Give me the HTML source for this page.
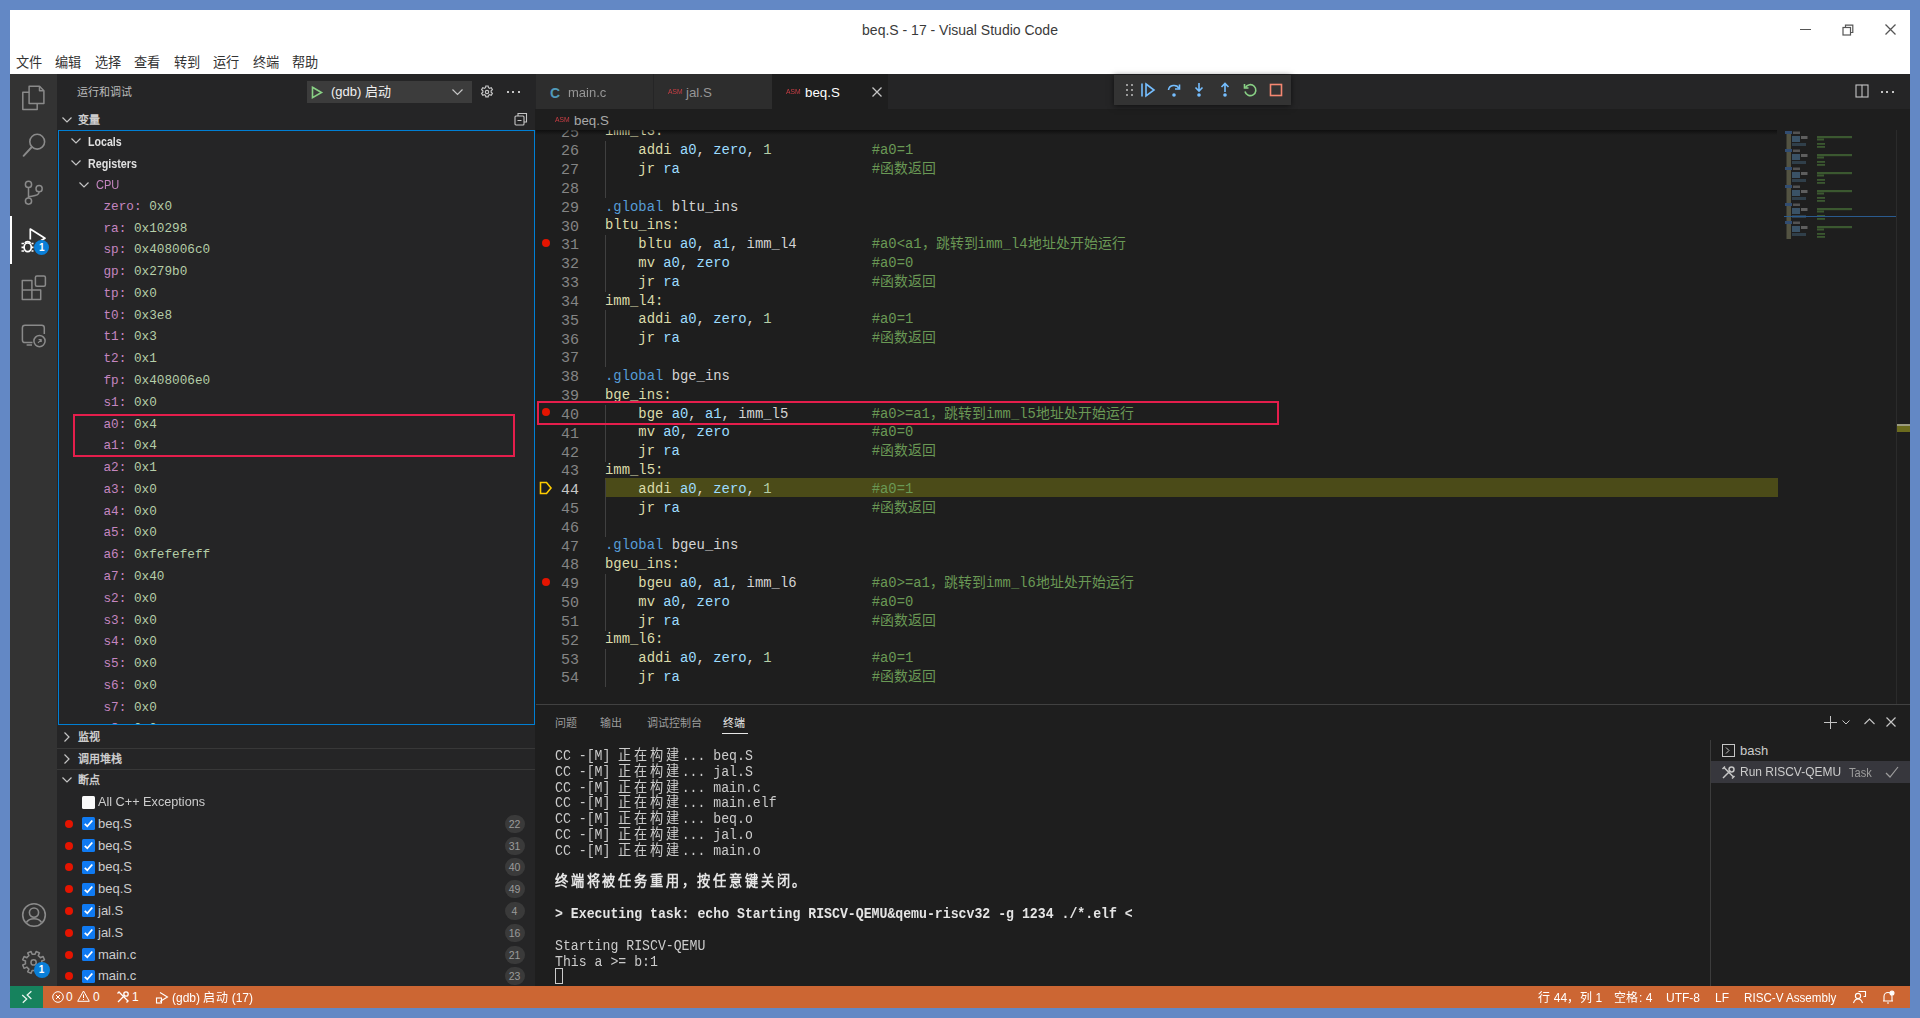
<!DOCTYPE html><html lang="zh-CN"><head><meta charset="utf-8"><title>beq.S - 17 - Visual Studio Code</title><style>
*{box-sizing:border-box;margin:0;padding:0}
html,body{width:1920px;height:1018px;overflow:hidden;background:#6388c5}
body{position:relative;font-family:"Liberation Sans",sans-serif}
.a{position:absolute}
.mono{font-family:"Liberation Mono",monospace}
.nw{white-space:pre}
svg{overflow:visible}
</style></head><body>
<div class="a" style="left:10px;top:10px;width:1900px;height:64px;background:#fff;"></div>
<div class="a nw " style="top:20.00px;font-size:14px;line-height:20px;color:#3a3a3a;left:660.00px;width:600px;text-align:center;">beq.S - 17 - Visual Studio Code</div>
<div class="a nw " style="top:53.30px;font-size:13.2px;line-height:20px;color:#333;font-weight:500;left:16.00px;">文件</div>
<div class="a nw " style="top:53.30px;font-size:13.2px;line-height:20px;color:#333;font-weight:500;left:55.00px;">编辑</div>
<div class="a nw " style="top:53.30px;font-size:13.2px;line-height:20px;color:#333;font-weight:500;left:95.00px;">选择</div>
<div class="a nw " style="top:53.30px;font-size:13.2px;line-height:20px;color:#333;font-weight:500;left:134.00px;">查看</div>
<div class="a nw " style="top:53.30px;font-size:13.2px;line-height:20px;color:#333;font-weight:500;left:174.00px;">转到</div>
<div class="a nw " style="top:53.30px;font-size:13.2px;line-height:20px;color:#333;font-weight:500;left:213.00px;">运行</div>
<div class="a nw " style="top:53.30px;font-size:13.2px;line-height:20px;color:#333;font-weight:500;left:253.00px;">终端</div>
<div class="a nw " style="top:53.30px;font-size:13.2px;line-height:20px;color:#333;font-weight:500;left:292.00px;">帮助</div>
<div class="a" style="left:1800px;top:29px;width:11px;height:1px;background:#555;"></div>
<svg class="a" style="left:1842px;top:24px" width="12" height="12"><rect x="1" y="3.5" width="7.5" height="7.5" fill="none" stroke="#555" stroke-width="1.2"/><path d="M3.5 3.5V1.2h7.3v7.3H8.5" fill="none" stroke="#555" stroke-width="1.2"/></svg>
<svg class="a" style="left:1885px;top:24px" width="11" height="11"><path d="M0.5 0.5L10.5 10.5M10.5 0.5L0.5 10.5" stroke="#555" stroke-width="1.3"/></svg>
<div class="a" style="left:10px;top:74px;width:47px;height:912px;background:#333;"></div>
<div class="a" style="left:10px;top:216px;width:2px;height:48px;background:#fff;"></div>
<svg class="a" style="left:0;top:0" width="60" height="1018" fill="none" stroke="#8a8a8a" stroke-width="1.5" stroke-linejoin="round">
<path d="M29.1 86.3H39.5L43.9 90.7V103.6H29.1Z"/><path d="M39.5 86.3V90.7H43.9"/><path d="M29.1 92.2H22.8V109.5H37.2V103.6"/>
<circle cx="37.2" cy="141.7" r="7.4" stroke-width="1.6"/><path d="M31.8 147L23.6 155.8" stroke-width="1.9" stroke-linecap="round"/>
<circle cx="28.5" cy="184.4" r="3.1"/><circle cx="28.5" cy="201.1" r="3.1"/><circle cx="39.1" cy="188.7" r="3.1"/>
<path d="M28.5 187.5V198M39.1 191.8C39.1 195.5 35 195.5 28.8 196.8"/>
<g stroke="#fff" stroke-width="1.7"><path d="M30.3 239.5V229L45 238.2L41 240.6"/>
<ellipse cx="27.7" cy="247.3" rx="3.6" ry="4.3"/><path d="M25 243.3a2.8 2.3 0 0 1 5.4 0"/>
<path d="M21.5 243.5h2.5M21.5 247.3h2.5M21.5 251h2.5M31.5 243.5h2M31.5 247.3h2M31.5 251h2"/></g>
<path d="M22.3 280.4H31.9V299.4H22.3ZM22.3 290H40.7V299.4H31.9"/><rect x="35.4" y="276" width="10" height="10.3" rx="1.5"/>
<path d="M40 325.2H25a2.6 2.6 0 0 0-2.6 2.6V339.9a2.6 2.6 0 0 0 2.6 2.6H32.5M44.3 334V327.8a2.6 2.6 0 0 0-2.6-2.6H40M26.6 344.9H32"/>
<circle cx="39.5" cy="341.1" r="5.6"/><path d="M38 342.8l3-3M38.6 339.5h2.6v2.6" stroke-width="1.2"/>
<circle cx="34" cy="915" r="11.3" stroke-width="1.6"/><circle cx="34" cy="912.6" r="4.6" stroke-width="1.6"/><path d="M26.4 922.5C28 919.8 30.8 918.7 34 918.7S40 919.8 41.6 922.5" stroke-width="1.6"/>
<path d="M41.80 962.40 L41.67 963.87 L44.51 964.93 L43.10 968.33 L40.35 967.06 L39.40 968.20 L38.26 969.15 L39.53 971.90 L36.13 973.31 L35.07 970.47 L33.60 970.60 L32.13 970.47 L31.07 973.31 L27.67 971.90 L28.94 969.15 L27.80 968.20 L26.85 967.06 L24.10 968.33 L22.69 964.93 L25.53 963.87 L25.40 962.40 L25.53 960.93 L22.69 959.87 L24.10 956.47 L26.85 957.74 L27.80 956.60 L28.94 955.65 L27.67 952.90 L31.07 951.49 L32.13 954.33 L33.60 954.20 L35.07 954.33 L36.13 951.49 L39.53 952.90 L38.26 955.65 L39.40 956.60 L40.35 957.74 L43.10 956.47 L44.51 959.87 L41.67 960.93Z" stroke-width="1.5"/><circle cx="33.6" cy="962.4" r="2.6"/>
</svg>
<div class="a" style="left:34.4px;top:240.4px;width:15px;height:15px;border-radius:7.5px;background:#0a7fd8;color:#fff;font-size:10px;line-height:15px;text-align:center;font-weight:bold">1</div>
<div class="a" style="left:33.5px;top:962.3px;width:16px;height:16px;border-radius:8px;background:#0a7fd8;color:#fff;font-size:10px;line-height:16px;text-align:center;font-weight:bold">1</div>
<div class="a" style="left:57px;top:74px;width:478px;height:912px;background:#252526;"></div>
<div class="a nw " style="top:81.50px;font-size:11px;line-height:20px;color:#bbbbbb;left:77.00px;">运行和调试</div>
<div class="a" style="left:307px;top:81px;width:165px;height:22px;background:#3c3c3c;"></div>
<svg class="a" style="left:311px;top:86px" width="12" height="13"><path d="M1.5 1.3L10.5 6.5L1.5 11.7z" fill="none" stroke="#89d185" stroke-width="1.6"/></svg>
<div class="a nw " style="top:82.00px;font-size:13px;line-height:20px;color:#f0f0f0;left:331.00px;">(gdb) 启动</div>
<svg class="a" style="left:452px;top:89px" width="11" height="7"><path d="M0.5 0.5L5.5 5.5L10.5 0.5" fill="none" stroke="#c5c5c5" stroke-width="1.2"/></svg>
<svg class="a" style="left:479px;top:84px" width="16" height="16" viewBox="0 0 24 24" fill="none" stroke="#c5c5c5" stroke-width="1.8"><circle cx="12" cy="12" r="2.5"/><path d="M10.3 3h3.4l.5 2.5 1.8 1 2.4-.9 1.7 2.9-1.9 1.7v2l1.9 1.7-1.7 2.9-2.4-.9-1.8 1-.5 2.5h-3.4l-.5-2.5-1.8-1-2.4.9-1.7-2.9 1.9-1.7v-2L3.9 8.5l1.7-2.9 2.4.9 1.8-1z"/></svg>
<div class="a" style="left:506.5px;top:91px;width:2px;height:2px;background:#c5c5c5;"></div>
<div class="a" style="left:512px;top:91px;width:2px;height:2px;background:#c5c5c5;"></div>
<div class="a" style="left:517.5px;top:91px;width:2px;height:2px;background:#c5c5c5;"></div>
<svg class="a" style="left:62px;top:116.5px" width="10" height="6"><path d="M0.5 0.5L5 5L9.5 0.5" fill="none" stroke="#c5c5c5" stroke-width="1.2"/></svg>
<div class="a nw " style="top:109.50px;font-size:11px;line-height:20px;color:#cccccc;font-weight:bold;left:78.00px;">变量</div>
<svg class="a" style="left:514px;top:112px" width="14" height="14" viewBox="0 0 14 14" fill="none" stroke="#c5c5c5" stroke-width="1.1"><rect x="1" y="4" width="9" height="9" rx="1"/><path d="M4 4V1.5h8.5V10H10M3.5 8.5h4"/></svg>
<div class="a" style="left:58px;top:130px;width:477px;height:595px;border:1px solid #007fd4;overflow:hidden">
</div>
<div class="a" style="left:58px;top:131px;width:476px;height:593px;overflow:hidden">
<svg class="a" style="left:13px;top:7.389999999999986px" width="10" height="6"><path d="M0.5 0.5L5 5L9.5 0.5" fill="none" stroke="#c5c5c5" stroke-width="1.2"/></svg>
<div class="a nw " style="left:30.00px;top:0.89px;font-size:12.5px;line-height:20px;color:#e0e0e0;transform:scaleX(0.85);transform-origin:0 0;font-weight:bold;">Locals</div>
<svg class="a" style="left:13px;top:29.170000000000016px" width="10" height="6"><path d="M0.5 0.5L5 5L9.5 0.5" fill="none" stroke="#c5c5c5" stroke-width="1.2"/></svg>
<div class="a nw " style="left:30.00px;top:22.67px;font-size:12.5px;line-height:20px;color:#e0e0e0;transform:scaleX(0.86);transform-origin:0 0;font-weight:bold;">Registers</div>
<svg class="a" style="left:21px;top:50.94999999999999px" width="10" height="6"><path d="M0.5 0.5L5 5L9.5 0.5" fill="none" stroke="#c5c5c5" stroke-width="1.2"/></svg>
<div class="a nw " style="left:38.00px;top:43.95px;font-size:13px;line-height:20px;color:#c586c0;transform:scaleX(0.85);transform-origin:0 0;">CPU</div>
<div class="a nw mono" style="left:45.50px;top:65.73px;font-size:12.7px;line-height:20px;color:#ccc;"><span style="color:#c586c0">zero:</span> <span style="color:#b5cea8">0x0</span></div>
<div class="a nw mono" style="left:45.50px;top:87.51px;font-size:12.7px;line-height:20px;color:#ccc;"><span style="color:#c586c0">ra:</span> <span style="color:#b5cea8">0x10298</span></div>
<div class="a nw mono" style="left:45.50px;top:109.29px;font-size:12.7px;line-height:20px;color:#ccc;"><span style="color:#c586c0">sp:</span> <span style="color:#b5cea8">0x408006c0</span></div>
<div class="a nw mono" style="left:45.50px;top:131.07px;font-size:12.7px;line-height:20px;color:#ccc;"><span style="color:#c586c0">gp:</span> <span style="color:#b5cea8">0x279b0</span></div>
<div class="a nw mono" style="left:45.50px;top:152.85px;font-size:12.7px;line-height:20px;color:#ccc;"><span style="color:#c586c0">tp:</span> <span style="color:#b5cea8">0x0</span></div>
<div class="a nw mono" style="left:45.50px;top:174.63px;font-size:12.7px;line-height:20px;color:#ccc;"><span style="color:#c586c0">t0:</span> <span style="color:#b5cea8">0x3e8</span></div>
<div class="a nw mono" style="left:45.50px;top:196.41px;font-size:12.7px;line-height:20px;color:#ccc;"><span style="color:#c586c0">t1:</span> <span style="color:#b5cea8">0x3</span></div>
<div class="a nw mono" style="left:45.50px;top:218.19px;font-size:12.7px;line-height:20px;color:#ccc;"><span style="color:#c586c0">t2:</span> <span style="color:#b5cea8">0x1</span></div>
<div class="a nw mono" style="left:45.50px;top:239.97px;font-size:12.7px;line-height:20px;color:#ccc;"><span style="color:#c586c0">fp:</span> <span style="color:#b5cea8">0x408006e0</span></div>
<div class="a nw mono" style="left:45.50px;top:261.75px;font-size:12.7px;line-height:20px;color:#ccc;"><span style="color:#c586c0">s1:</span> <span style="color:#b5cea8">0x0</span></div>
<div class="a nw mono" style="left:45.50px;top:283.53px;font-size:12.7px;line-height:20px;color:#ccc;"><span style="color:#c586c0">a0:</span> <span style="color:#b5cea8">0x4</span></div>
<div class="a nw mono" style="left:45.50px;top:305.31px;font-size:12.7px;line-height:20px;color:#ccc;"><span style="color:#c586c0">a1:</span> <span style="color:#b5cea8">0x4</span></div>
<div class="a nw mono" style="left:45.50px;top:327.09px;font-size:12.7px;line-height:20px;color:#ccc;"><span style="color:#c586c0">a2:</span> <span style="color:#b5cea8">0x1</span></div>
<div class="a nw mono" style="left:45.50px;top:348.87px;font-size:12.7px;line-height:20px;color:#ccc;"><span style="color:#c586c0">a3:</span> <span style="color:#b5cea8">0x0</span></div>
<div class="a nw mono" style="left:45.50px;top:370.65px;font-size:12.7px;line-height:20px;color:#ccc;"><span style="color:#c586c0">a4:</span> <span style="color:#b5cea8">0x0</span></div>
<div class="a nw mono" style="left:45.50px;top:392.43px;font-size:12.7px;line-height:20px;color:#ccc;"><span style="color:#c586c0">a5:</span> <span style="color:#b5cea8">0x0</span></div>
<div class="a nw mono" style="left:45.50px;top:414.21px;font-size:12.7px;line-height:20px;color:#ccc;"><span style="color:#c586c0">a6:</span> <span style="color:#b5cea8">0xfefefeff</span></div>
<div class="a nw mono" style="left:45.50px;top:435.99px;font-size:12.7px;line-height:20px;color:#ccc;"><span style="color:#c586c0">a7:</span> <span style="color:#b5cea8">0x40</span></div>
<div class="a nw mono" style="left:45.50px;top:457.77px;font-size:12.7px;line-height:20px;color:#ccc;"><span style="color:#c586c0">s2:</span> <span style="color:#b5cea8">0x0</span></div>
<div class="a nw mono" style="left:45.50px;top:479.55px;font-size:12.7px;line-height:20px;color:#ccc;"><span style="color:#c586c0">s3:</span> <span style="color:#b5cea8">0x0</span></div>
<div class="a nw mono" style="left:45.50px;top:501.33px;font-size:12.7px;line-height:20px;color:#ccc;"><span style="color:#c586c0">s4:</span> <span style="color:#b5cea8">0x0</span></div>
<div class="a nw mono" style="left:45.50px;top:523.11px;font-size:12.7px;line-height:20px;color:#ccc;"><span style="color:#c586c0">s5:</span> <span style="color:#b5cea8">0x0</span></div>
<div class="a nw mono" style="left:45.50px;top:544.89px;font-size:12.7px;line-height:20px;color:#ccc;"><span style="color:#c586c0">s6:</span> <span style="color:#b5cea8">0x0</span></div>
<div class="a nw mono" style="left:45.50px;top:566.67px;font-size:12.7px;line-height:20px;color:#ccc;"><span style="color:#c586c0">s7:</span> <span style="color:#b5cea8">0x0</span></div>
<div class="a nw mono" style="left:45.50px;top:588.45px;font-size:12.7px;line-height:20px;color:#ccc;"><span style="color:#c586c0">s8:</span> <span style="color:#b5cea8">0x0</span></div>
</div>
<div class="a" style="left:73px;top:414px;width:442px;height:43px;border:2.5px solid #e51e4c"></div>
<svg class="a" style="left:64px;top:731.7px" width="6" height="10"><path d="M0.5 0.5L5 5L0.5 9.5" fill="none" stroke="#c5c5c5" stroke-width="1.2"/></svg>
<div class="a nw " style="top:726.70px;font-size:11px;line-height:20px;color:#cccccc;font-weight:bold;left:78.00px;">监视</div>
<div class="a" style="left:57px;top:747.6px;width:478px;height:1px;background:#383838;"></div>
<svg class="a" style="left:64px;top:753.5px" width="6" height="10"><path d="M0.5 0.5L5 5L0.5 9.5" fill="none" stroke="#c5c5c5" stroke-width="1.2"/></svg>
<div class="a nw " style="top:748.50px;font-size:11px;line-height:20px;color:#cccccc;font-weight:bold;left:78.00px;">调用堆栈</div>
<div class="a" style="left:57px;top:769.4px;width:478px;height:1px;background:#383838;"></div>
<svg class="a" style="left:62px;top:777.3px" width="10" height="6"><path d="M0.5 0.5L5 5L9.5 0.5" fill="none" stroke="#c5c5c5" stroke-width="1.2"/></svg>
<div class="a nw " style="top:770.30px;font-size:11px;line-height:20px;color:#cccccc;font-weight:bold;left:78.00px;">断点</div>
<div class="a" style="left:82px;top:795.59px;width:13px;height:13px;background:#fafafa;border-radius:1.5px"></div>
<div class="a nw " style="top:792.09px;font-size:13px;line-height:20px;color:#cccccc;transform:scaleX(0.975);transform-origin:0 0;left:98.00px;">All C++ Exceptions</div>
<div class="a" style="left:65px;top:819.87px;width:8px;height:8px;border-radius:4px;background:#e51400"></div>
<svg class="a" style="left:82px;top:817.37px" width="13" height="13"><rect width="13" height="13" rx="1.5" fill="#0f7af2"/><path d="M2.8 6.8L5.3 9.3L10.3 3.5" fill="none" stroke="#fff" stroke-width="1.8"/></svg>
<div class="a nw " style="top:813.87px;font-size:13px;line-height:20px;color:#cccccc;left:98.00px;">beq.S</div>
<div class="a" style="left:504.5px;top:814.87px;width:20px;height:18px;border-radius:9px;background:#3a3a3a;color:#9a9a9a;font-size:10.5px;line-height:18px;text-align:center">22</div>
<div class="a" style="left:65px;top:841.6500000000001px;width:8px;height:8px;border-radius:4px;background:#e51400"></div>
<svg class="a" style="left:82px;top:839.1500000000001px" width="13" height="13"><rect width="13" height="13" rx="1.5" fill="#0f7af2"/><path d="M2.8 6.8L5.3 9.3L10.3 3.5" fill="none" stroke="#fff" stroke-width="1.8"/></svg>
<div class="a nw " style="top:835.65px;font-size:13px;line-height:20px;color:#cccccc;left:98.00px;">beq.S</div>
<div class="a" style="left:504.5px;top:836.6500000000001px;width:20px;height:18px;border-radius:9px;background:#3a3a3a;color:#9a9a9a;font-size:10.5px;line-height:18px;text-align:center">31</div>
<div class="a" style="left:65px;top:863.4300000000001px;width:8px;height:8px;border-radius:4px;background:#e51400"></div>
<svg class="a" style="left:82px;top:860.9300000000001px" width="13" height="13"><rect width="13" height="13" rx="1.5" fill="#0f7af2"/><path d="M2.8 6.8L5.3 9.3L10.3 3.5" fill="none" stroke="#fff" stroke-width="1.8"/></svg>
<div class="a nw " style="top:857.43px;font-size:13px;line-height:20px;color:#cccccc;left:98.00px;">beq.S</div>
<div class="a" style="left:504.5px;top:858.4300000000001px;width:20px;height:18px;border-radius:9px;background:#3a3a3a;color:#9a9a9a;font-size:10.5px;line-height:18px;text-align:center">40</div>
<div class="a" style="left:65px;top:885.21px;width:8px;height:8px;border-radius:4px;background:#e51400"></div>
<svg class="a" style="left:82px;top:882.71px" width="13" height="13"><rect width="13" height="13" rx="1.5" fill="#0f7af2"/><path d="M2.8 6.8L5.3 9.3L10.3 3.5" fill="none" stroke="#fff" stroke-width="1.8"/></svg>
<div class="a nw " style="top:879.21px;font-size:13px;line-height:20px;color:#cccccc;left:98.00px;">beq.S</div>
<div class="a" style="left:504.5px;top:880.21px;width:20px;height:18px;border-radius:9px;background:#3a3a3a;color:#9a9a9a;font-size:10.5px;line-height:18px;text-align:center">49</div>
<div class="a" style="left:65px;top:906.99px;width:8px;height:8px;border-radius:4px;background:#e51400"></div>
<svg class="a" style="left:82px;top:904.49px" width="13" height="13"><rect width="13" height="13" rx="1.5" fill="#0f7af2"/><path d="M2.8 6.8L5.3 9.3L10.3 3.5" fill="none" stroke="#fff" stroke-width="1.8"/></svg>
<div class="a nw " style="top:900.99px;font-size:13px;line-height:20px;color:#cccccc;left:98.00px;">jal.S</div>
<div class="a" style="left:504.5px;top:901.99px;width:20px;height:18px;border-radius:9px;background:#3a3a3a;color:#9a9a9a;font-size:10.5px;line-height:18px;text-align:center">4</div>
<div class="a" style="left:65px;top:928.77px;width:8px;height:8px;border-radius:4px;background:#e51400"></div>
<svg class="a" style="left:82px;top:926.27px" width="13" height="13"><rect width="13" height="13" rx="1.5" fill="#0f7af2"/><path d="M2.8 6.8L5.3 9.3L10.3 3.5" fill="none" stroke="#fff" stroke-width="1.8"/></svg>
<div class="a nw " style="top:922.77px;font-size:13px;line-height:20px;color:#cccccc;left:98.00px;">jal.S</div>
<div class="a" style="left:504.5px;top:923.77px;width:20px;height:18px;border-radius:9px;background:#3a3a3a;color:#9a9a9a;font-size:10.5px;line-height:18px;text-align:center">16</div>
<div class="a" style="left:65px;top:950.5500000000001px;width:8px;height:8px;border-radius:4px;background:#e51400"></div>
<svg class="a" style="left:82px;top:948.0500000000001px" width="13" height="13"><rect width="13" height="13" rx="1.5" fill="#0f7af2"/><path d="M2.8 6.8L5.3 9.3L10.3 3.5" fill="none" stroke="#fff" stroke-width="1.8"/></svg>
<div class="a nw " style="top:944.55px;font-size:13px;line-height:20px;color:#cccccc;left:98.00px;">main.c</div>
<div class="a" style="left:504.5px;top:945.5500000000001px;width:20px;height:18px;border-radius:9px;background:#3a3a3a;color:#9a9a9a;font-size:10.5px;line-height:18px;text-align:center">21</div>
<div class="a" style="left:65px;top:972.33px;width:8px;height:8px;border-radius:4px;background:#e51400"></div>
<svg class="a" style="left:82px;top:969.83px" width="13" height="13"><rect width="13" height="13" rx="1.5" fill="#0f7af2"/><path d="M2.8 6.8L5.3 9.3L10.3 3.5" fill="none" stroke="#fff" stroke-width="1.8"/></svg>
<div class="a nw " style="top:966.33px;font-size:13px;line-height:20px;color:#cccccc;left:98.00px;">main.c</div>
<div class="a" style="left:504.5px;top:967.33px;width:20px;height:18px;border-radius:9px;background:#3a3a3a;color:#9a9a9a;font-size:10.5px;line-height:18px;text-align:center">23</div>
<div class="a" style="left:535px;top:74px;width:1375px;height:912px;background:#1e1e1e;"></div>
<div class="a" style="left:535px;top:74px;width:1375px;height:35px;background:#252526;"></div>
<div class="a" style="left:536px;top:74px;width:117px;height:35px;background:#2d2d2d;"></div>
<div class="a" style="left:654px;top:74px;width:118px;height:35px;background:#2d2d2d;"></div>
<div class="a" style="left:772px;top:74px;width:116px;height:35px;background:#1e1e1e;"></div>
<div class="a nw " style="top:82.50px;font-size:14px;line-height:20px;color:#519aba;font-weight:bold;left:550.00px;">C</div>
<div class="a nw " style="top:82.80px;font-size:13.3px;line-height:20px;color:#969696;transform:scaleX(0.98);transform-origin:0 0;left:568.00px;">main.c</div>
<div class="a" style="left:667.5px;top:86.8px;font-size:7.5px;line-height:10px;color:#cc3e44;transform:scaleX(0.9);transform-origin:0 0">ASM</div>
<div class="a nw " style="top:82.80px;font-size:13.3px;line-height:20px;color:#969696;left:686.00px;">jal.S</div>
<div class="a" style="left:785.5px;top:86.8px;font-size:7.5px;line-height:10px;color:#cc3e44;transform:scaleX(0.9);transform-origin:0 0">ASM</div>
<div class="a nw " style="top:82.80px;font-size:13.3px;line-height:20px;color:#ffffff;left:805.00px;">beq.S</div>
<svg class="a" style="left:872px;top:87px" width="10" height="10"><path d="M0.5 0.5L9.5 9.5M9.5 0.5L0.5 9.5" fill="none" stroke="#c5c5c5" stroke-width="1.3"/></svg>
<div class="a" style="left:1114px;top:75px;width:177px;height:30px;background:#333;box-shadow:0 1px 6px rgba(0,0,0,.6)"></div>
<div class="a" style="left:1125.5px;top:84px;width:2px;height:2px;background:#9a9a9a;"></div>
<div class="a" style="left:1125.5px;top:89px;width:2px;height:2px;background:#9a9a9a;"></div>
<div class="a" style="left:1125.5px;top:94px;width:2px;height:2px;background:#9a9a9a;"></div>
<div class="a" style="left:1130.5px;top:84px;width:2px;height:2px;background:#9a9a9a;"></div>
<div class="a" style="left:1130.5px;top:89px;width:2px;height:2px;background:#9a9a9a;"></div>
<div class="a" style="left:1130.5px;top:94px;width:2px;height:2px;background:#9a9a9a;"></div>
<svg class="a" style="left:1140px;top:82px" width="16" height="16" fill="none" stroke="#75beff" stroke-width="1.6"><path d="M2 1.5v13"/><path d="M6 2L14 8L6 14z"/></svg>
<svg class="a" style="left:1166px;top:82px" width="16" height="16" fill="none" stroke="#75beff" stroke-width="1.6"><path d="M2.5 8a5.5 5 0 0 1 10.5-1.5"/><path d="M13.5 2.5v4.5H9"/><circle cx="8" cy="13" r="1.8" fill="#75beff" stroke="none"/></svg>
<svg class="a" style="left:1191px;top:82px" width="16" height="16" fill="none" stroke="#75beff" stroke-width="1.6"><path d="M8 1v7.5M4.5 5.5L8 9l3.5-3.5"/><circle cx="8" cy="13" r="1.8" fill="#75beff" stroke="none"/></svg>
<svg class="a" style="left:1217px;top:82px" width="16" height="16" fill="none" stroke="#75beff" stroke-width="1.6"><path d="M8 10V1.5M4.5 5L8 1.5L11.5 5"/><circle cx="8" cy="13" r="1.8" fill="#75beff" stroke="none"/></svg>
<svg class="a" style="left:1242px;top:82px" width="16" height="16" fill="none" stroke="#89d185" stroke-width="1.6"><path d="M3.5 5.5a5.5 5.5 0 1 1-.5 4"/><path d="M2.5 2v4h4"/></svg>
<svg class="a" style="left:1268px;top:82px" width="16" height="16" fill="none" stroke="#f48771" stroke-width="1.6"><rect x="2.5" y="2.5" width="11" height="11"/></svg>
<svg class="a" style="left:1855px;top:84px" width="14" height="14" fill="none" stroke="#c5c5c5" stroke-width="1.1"><rect x="1" y="1" width="12" height="12"/><path d="M7 1v12"/></svg>
<div class="a" style="left:1880.5px;top:91px;width:2px;height:2px;background:#c5c5c5;"></div>
<div class="a" style="left:1886px;top:91px;width:2px;height:2px;background:#c5c5c5;"></div>
<div class="a" style="left:1891.5px;top:91px;width:2px;height:2px;background:#c5c5c5;"></div>
<div class="a" style="left:555px;top:115px;font-size:7.5px;line-height:10px;color:#cc3e44;transform:scaleX(0.9);transform-origin:0 0">ASM</div>
<div class="a nw " style="top:110.50px;font-size:13.3px;line-height:20px;color:#a9a9a9;left:574.00px;">beq.S</div>
<div class="a" style="left:536px;top:130px;width:1241px;height:4.5px;background:linear-gradient(rgba(0,0,0,0.5),rgba(0,0,0,0));z-index:5"></div>
<div class="a" style="left:536px;top:130px;width:1374px;height:574px;overflow:hidden">
<div class="a" style="left:69px;top:348.35px;width:1173px;height:18.82px;background:#4b4b18"></div>
<div class="a nw mono" style="left:-56px;top:-5.43px;width:99px;text-align:right;font-size:15px;line-height:18.82px;color:#858585">25</div>
<div class="a nw mono" style="left:69px;top:-7.73px;font-size:13.88px;line-height:18.82px;color:#d4d4d4"><span style="color:#dcdcaa">imm_l3:</span></div>
<div class="a nw mono" style="left:-56px;top:13.39px;width:99px;text-align:right;font-size:15px;line-height:18.82px;color:#858585">26</div>
<div class="a" style="left:69px;top:11.09px;width:1px;height:19.32px;background:#404040"></div>
<div class="a nw mono" style="left:69px;top:11.09px;font-size:13.88px;line-height:18.82px;color:#d4d4d4">    <span style="color:#dcdcaa">addi</span> <span style="color:#9cdcfe">a0</span><span style="color:#d4d4d4">,</span> <span style="color:#9cdcfe">zero</span><span style="color:#d4d4d4">,</span> <span style="color:#b5cea8">1</span></div>
<div class="a nw mono" style="left:335.66px;top:11.09px;font-size:13.88px;line-height:18.82px;color:#6a9955">#a0=1</div>
<div class="a nw mono" style="left:-56px;top:32.21px;width:99px;text-align:right;font-size:15px;line-height:18.82px;color:#858585">27</div>
<div class="a" style="left:69px;top:29.91px;width:1px;height:19.32px;background:#404040"></div>
<div class="a nw mono" style="left:69px;top:29.91px;font-size:13.88px;line-height:18.82px;color:#d4d4d4">    <span style="color:#dcdcaa">jr</span> <span style="color:#9cdcfe">ra</span></div>
<div class="a nw mono" style="left:335.66px;top:29.91px;font-size:13.88px;line-height:18.82px;color:#6a9955">#函数返回</div>
<div class="a nw mono" style="left:-56px;top:51.03px;width:99px;text-align:right;font-size:15px;line-height:18.82px;color:#858585">28</div>
<div class="a" style="left:69px;top:48.73px;width:1px;height:19.32px;background:#404040"></div>
<div class="a nw mono" style="left:69px;top:48.73px;font-size:13.88px;line-height:18.82px;color:#d4d4d4"></div>
<div class="a nw mono" style="left:-56px;top:69.85px;width:99px;text-align:right;font-size:15px;line-height:18.82px;color:#858585">29</div>
<div class="a nw mono" style="left:69px;top:67.55px;font-size:13.88px;line-height:18.82px;color:#d4d4d4"><span style="color:#569cd6">.global</span> <span style="color:#d4d4d4">bltu_ins</span></div>
<div class="a nw mono" style="left:-56px;top:88.67px;width:99px;text-align:right;font-size:15px;line-height:18.82px;color:#858585">30</div>
<div class="a nw mono" style="left:69px;top:86.37px;font-size:13.88px;line-height:18.82px;color:#d4d4d4"><span style="color:#dcdcaa">bltu_ins:</span></div>
<div class="a nw mono" style="left:-56px;top:107.49px;width:99px;text-align:right;font-size:15px;line-height:18.82px;color:#858585">31</div>
<div class="a" style="left:69px;top:105.19px;width:1px;height:19.32px;background:#404040"></div>
<div class="a nw mono" style="left:69px;top:105.19px;font-size:13.88px;line-height:18.82px;color:#d4d4d4">    <span style="color:#dcdcaa">bltu</span> <span style="color:#9cdcfe">a0</span><span style="color:#d4d4d4">,</span> <span style="color:#9cdcfe">a1</span><span style="color:#d4d4d4">,</span> <span style="color:#d4d4d4">imm_l4</span></div>
<div class="a nw mono" style="left:335.66px;top:105.19px;font-size:13.88px;line-height:18.82px;color:#6a9955">#a0&lt;a1，跳转到imm_l4地址处开始运行</div>
<div class="a nw mono" style="left:-56px;top:126.31px;width:99px;text-align:right;font-size:15px;line-height:18.82px;color:#858585">32</div>
<div class="a" style="left:69px;top:124.01px;width:1px;height:19.32px;background:#404040"></div>
<div class="a nw mono" style="left:69px;top:124.01px;font-size:13.88px;line-height:18.82px;color:#d4d4d4">    <span style="color:#dcdcaa">mv</span> <span style="color:#9cdcfe">a0</span><span style="color:#d4d4d4">,</span> <span style="color:#9cdcfe">zero</span></div>
<div class="a nw mono" style="left:335.66px;top:124.01px;font-size:13.88px;line-height:18.82px;color:#6a9955">#a0=0</div>
<div class="a nw mono" style="left:-56px;top:145.13px;width:99px;text-align:right;font-size:15px;line-height:18.82px;color:#858585">33</div>
<div class="a" style="left:69px;top:142.83px;width:1px;height:19.32px;background:#404040"></div>
<div class="a nw mono" style="left:69px;top:142.83px;font-size:13.88px;line-height:18.82px;color:#d4d4d4">    <span style="color:#dcdcaa">jr</span> <span style="color:#9cdcfe">ra</span></div>
<div class="a nw mono" style="left:335.66px;top:142.83px;font-size:13.88px;line-height:18.82px;color:#6a9955">#函数返回</div>
<div class="a nw mono" style="left:-56px;top:163.95px;width:99px;text-align:right;font-size:15px;line-height:18.82px;color:#858585">34</div>
<div class="a nw mono" style="left:69px;top:161.65px;font-size:13.88px;line-height:18.82px;color:#d4d4d4"><span style="color:#dcdcaa">imm_l4:</span></div>
<div class="a nw mono" style="left:-56px;top:182.77px;width:99px;text-align:right;font-size:15px;line-height:18.82px;color:#858585">35</div>
<div class="a" style="left:69px;top:180.47px;width:1px;height:19.32px;background:#404040"></div>
<div class="a nw mono" style="left:69px;top:180.47px;font-size:13.88px;line-height:18.82px;color:#d4d4d4">    <span style="color:#dcdcaa">addi</span> <span style="color:#9cdcfe">a0</span><span style="color:#d4d4d4">,</span> <span style="color:#9cdcfe">zero</span><span style="color:#d4d4d4">,</span> <span style="color:#b5cea8">1</span></div>
<div class="a nw mono" style="left:335.66px;top:180.47px;font-size:13.88px;line-height:18.82px;color:#6a9955">#a0=1</div>
<div class="a nw mono" style="left:-56px;top:201.59px;width:99px;text-align:right;font-size:15px;line-height:18.82px;color:#858585">36</div>
<div class="a" style="left:69px;top:199.29px;width:1px;height:19.32px;background:#404040"></div>
<div class="a nw mono" style="left:69px;top:199.29px;font-size:13.88px;line-height:18.82px;color:#d4d4d4">    <span style="color:#dcdcaa">jr</span> <span style="color:#9cdcfe">ra</span></div>
<div class="a nw mono" style="left:335.66px;top:199.29px;font-size:13.88px;line-height:18.82px;color:#6a9955">#函数返回</div>
<div class="a nw mono" style="left:-56px;top:220.41px;width:99px;text-align:right;font-size:15px;line-height:18.82px;color:#858585">37</div>
<div class="a" style="left:69px;top:218.11px;width:1px;height:19.32px;background:#404040"></div>
<div class="a nw mono" style="left:69px;top:218.11px;font-size:13.88px;line-height:18.82px;color:#d4d4d4"></div>
<div class="a nw mono" style="left:-56px;top:239.23px;width:99px;text-align:right;font-size:15px;line-height:18.82px;color:#858585">38</div>
<div class="a nw mono" style="left:69px;top:236.93px;font-size:13.88px;line-height:18.82px;color:#d4d4d4"><span style="color:#569cd6">.global</span> <span style="color:#d4d4d4">bge_ins</span></div>
<div class="a nw mono" style="left:-56px;top:258.05px;width:99px;text-align:right;font-size:15px;line-height:18.82px;color:#858585">39</div>
<div class="a nw mono" style="left:69px;top:255.75px;font-size:13.88px;line-height:18.82px;color:#d4d4d4"><span style="color:#dcdcaa">bge_ins:</span></div>
<div class="a nw mono" style="left:-56px;top:276.87px;width:99px;text-align:right;font-size:15px;line-height:18.82px;color:#858585">40</div>
<div class="a" style="left:69px;top:274.57px;width:1px;height:19.32px;background:#404040"></div>
<div class="a nw mono" style="left:69px;top:274.57px;font-size:13.88px;line-height:18.82px;color:#d4d4d4">    <span style="color:#dcdcaa">bge</span> <span style="color:#9cdcfe">a0</span><span style="color:#d4d4d4">,</span> <span style="color:#9cdcfe">a1</span><span style="color:#d4d4d4">,</span> <span style="color:#d4d4d4">imm_l5</span></div>
<div class="a nw mono" style="left:335.66px;top:274.57px;font-size:13.88px;line-height:18.82px;color:#6a9955">#a0&gt;=a1，跳转到imm_l5地址处开始运行</div>
<div class="a nw mono" style="left:-56px;top:295.69px;width:99px;text-align:right;font-size:15px;line-height:18.82px;color:#858585">41</div>
<div class="a" style="left:69px;top:293.39px;width:1px;height:19.32px;background:#404040"></div>
<div class="a nw mono" style="left:69px;top:293.39px;font-size:13.88px;line-height:18.82px;color:#d4d4d4">    <span style="color:#dcdcaa">mv</span> <span style="color:#9cdcfe">a0</span><span style="color:#d4d4d4">,</span> <span style="color:#9cdcfe">zero</span></div>
<div class="a nw mono" style="left:335.66px;top:293.39px;font-size:13.88px;line-height:18.82px;color:#6a9955">#a0=0</div>
<div class="a nw mono" style="left:-56px;top:314.51px;width:99px;text-align:right;font-size:15px;line-height:18.82px;color:#858585">42</div>
<div class="a" style="left:69px;top:312.21px;width:1px;height:19.32px;background:#404040"></div>
<div class="a nw mono" style="left:69px;top:312.21px;font-size:13.88px;line-height:18.82px;color:#d4d4d4">    <span style="color:#dcdcaa">jr</span> <span style="color:#9cdcfe">ra</span></div>
<div class="a nw mono" style="left:335.66px;top:312.21px;font-size:13.88px;line-height:18.82px;color:#6a9955">#函数返回</div>
<div class="a nw mono" style="left:-56px;top:333.33px;width:99px;text-align:right;font-size:15px;line-height:18.82px;color:#858585">43</div>
<div class="a nw mono" style="left:69px;top:331.03px;font-size:13.88px;line-height:18.82px;color:#d4d4d4"><span style="color:#dcdcaa">imm_l5:</span></div>
<div class="a nw mono" style="left:-56px;top:352.15px;width:99px;text-align:right;font-size:15px;line-height:18.82px;color:#c6c6c6">44</div>
<div class="a" style="left:69px;top:349.85px;width:1px;height:19.32px;background:#404040"></div>
<div class="a nw mono" style="left:69px;top:349.85px;font-size:13.88px;line-height:18.82px;color:#d4d4d4">    <span style="color:#dcdcaa">addi</span> <span style="color:#9cdcfe">a0</span><span style="color:#d4d4d4">,</span> <span style="color:#9cdcfe">zero</span><span style="color:#d4d4d4">,</span> <span style="color:#b5cea8">1</span></div>
<div class="a nw mono" style="left:335.66px;top:349.85px;font-size:13.88px;line-height:18.82px;color:#6a9955">#a0=1</div>
<div class="a nw mono" style="left:-56px;top:370.97px;width:99px;text-align:right;font-size:15px;line-height:18.82px;color:#858585">45</div>
<div class="a" style="left:69px;top:368.67px;width:1px;height:19.32px;background:#404040"></div>
<div class="a nw mono" style="left:69px;top:368.67px;font-size:13.88px;line-height:18.82px;color:#d4d4d4">    <span style="color:#dcdcaa">jr</span> <span style="color:#9cdcfe">ra</span></div>
<div class="a nw mono" style="left:335.66px;top:368.67px;font-size:13.88px;line-height:18.82px;color:#6a9955">#函数返回</div>
<div class="a nw mono" style="left:-56px;top:389.79px;width:99px;text-align:right;font-size:15px;line-height:18.82px;color:#858585">46</div>
<div class="a" style="left:69px;top:387.49px;width:1px;height:19.32px;background:#404040"></div>
<div class="a nw mono" style="left:69px;top:387.49px;font-size:13.88px;line-height:18.82px;color:#d4d4d4"></div>
<div class="a nw mono" style="left:-56px;top:408.61px;width:99px;text-align:right;font-size:15px;line-height:18.82px;color:#858585">47</div>
<div class="a nw mono" style="left:69px;top:406.31px;font-size:13.88px;line-height:18.82px;color:#d4d4d4"><span style="color:#569cd6">.global</span> <span style="color:#d4d4d4">bgeu_ins</span></div>
<div class="a nw mono" style="left:-56px;top:427.43px;width:99px;text-align:right;font-size:15px;line-height:18.82px;color:#858585">48</div>
<div class="a nw mono" style="left:69px;top:425.13px;font-size:13.88px;line-height:18.82px;color:#d4d4d4"><span style="color:#dcdcaa">bgeu_ins:</span></div>
<div class="a nw mono" style="left:-56px;top:446.25px;width:99px;text-align:right;font-size:15px;line-height:18.82px;color:#858585">49</div>
<div class="a" style="left:69px;top:443.95px;width:1px;height:19.32px;background:#404040"></div>
<div class="a nw mono" style="left:69px;top:443.95px;font-size:13.88px;line-height:18.82px;color:#d4d4d4">    <span style="color:#dcdcaa">bgeu</span> <span style="color:#9cdcfe">a0</span><span style="color:#d4d4d4">,</span> <span style="color:#9cdcfe">a1</span><span style="color:#d4d4d4">,</span> <span style="color:#d4d4d4">imm_l6</span></div>
<div class="a nw mono" style="left:335.66px;top:443.95px;font-size:13.88px;line-height:18.82px;color:#6a9955">#a0&gt;=a1，跳转到imm_l6地址处开始运行</div>
<div class="a nw mono" style="left:-56px;top:465.07px;width:99px;text-align:right;font-size:15px;line-height:18.82px;color:#858585">50</div>
<div class="a" style="left:69px;top:462.77px;width:1px;height:19.32px;background:#404040"></div>
<div class="a nw mono" style="left:69px;top:462.77px;font-size:13.88px;line-height:18.82px;color:#d4d4d4">    <span style="color:#dcdcaa">mv</span> <span style="color:#9cdcfe">a0</span><span style="color:#d4d4d4">,</span> <span style="color:#9cdcfe">zero</span></div>
<div class="a nw mono" style="left:335.66px;top:462.77px;font-size:13.88px;line-height:18.82px;color:#6a9955">#a0=0</div>
<div class="a nw mono" style="left:-56px;top:483.89px;width:99px;text-align:right;font-size:15px;line-height:18.82px;color:#858585">51</div>
<div class="a" style="left:69px;top:481.59px;width:1px;height:19.32px;background:#404040"></div>
<div class="a nw mono" style="left:69px;top:481.59px;font-size:13.88px;line-height:18.82px;color:#d4d4d4">    <span style="color:#dcdcaa">jr</span> <span style="color:#9cdcfe">ra</span></div>
<div class="a nw mono" style="left:335.66px;top:481.59px;font-size:13.88px;line-height:18.82px;color:#6a9955">#函数返回</div>
<div class="a nw mono" style="left:-56px;top:502.71px;width:99px;text-align:right;font-size:15px;line-height:18.82px;color:#858585">52</div>
<div class="a nw mono" style="left:69px;top:500.41px;font-size:13.88px;line-height:18.82px;color:#d4d4d4"><span style="color:#dcdcaa">imm_l6:</span></div>
<div class="a nw mono" style="left:-56px;top:521.53px;width:99px;text-align:right;font-size:15px;line-height:18.82px;color:#858585">53</div>
<div class="a" style="left:69px;top:519.23px;width:1px;height:19.32px;background:#404040"></div>
<div class="a nw mono" style="left:69px;top:519.23px;font-size:13.88px;line-height:18.82px;color:#d4d4d4">    <span style="color:#dcdcaa">addi</span> <span style="color:#9cdcfe">a0</span><span style="color:#d4d4d4">,</span> <span style="color:#9cdcfe">zero</span><span style="color:#d4d4d4">,</span> <span style="color:#b5cea8">1</span></div>
<div class="a nw mono" style="left:335.66px;top:519.23px;font-size:13.88px;line-height:18.82px;color:#6a9955">#a0=1</div>
<div class="a nw mono" style="left:-56px;top:540.35px;width:99px;text-align:right;font-size:15px;line-height:18.82px;color:#858585">54</div>
<div class="a" style="left:69px;top:538.05px;width:1px;height:19.32px;background:#404040"></div>
<div class="a nw mono" style="left:69px;top:538.05px;font-size:13.88px;line-height:18.82px;color:#d4d4d4">    <span style="color:#dcdcaa">jr</span> <span style="color:#9cdcfe">ra</span></div>
<div class="a nw mono" style="left:335.66px;top:538.05px;font-size:13.88px;line-height:18.82px;color:#6a9955">#函数返回</div>
<div class="a" style="left:5.5px;top:109.10px;width:8px;height:8px;border-radius:4px;background:#e51400"></div>
<div class="a" style="left:5.5px;top:278.48px;width:8px;height:8px;border-radius:4px;background:#e51400"></div>
<div class="a" style="left:5.5px;top:447.86px;width:8px;height:8px;border-radius:4px;background:#e51400"></div>
<svg class="a" style="left:3px;top:350.76px" width="14" height="14"><path d="M1.5 1.5h6l4.5 5.5l-4.5 5.5h-6z" fill="none" stroke="#ffcc00" stroke-width="1.6"/></svg>
</div>
<div class="a" style="left:537px;top:401px;width:742px;height:24px;border:2px solid #e51e4c"></div>
<svg class="a" style="left:1780px;top:126px" width="120" height="120"><defs><filter id="bl"><feGaussianBlur stdDeviation="0.45"/></filter></defs><g filter="url(#bl)" opacity="0.6" transform="translate(-1780,-126)"><rect x="1785" y="131" width="7" height="3" fill="#3f6da8"/><rect x="1793" y="131.5" width="7" height="2.5" fill="#777"/><rect x="1786.5" y="134" width="4.5" height="15" fill="#77775a"/><rect x="1792" y="136" width="8" height="6" fill="#4d7496"/><rect x="1801" y="136" width="6.5" height="3" fill="#8a8a8a"/><rect x="1792" y="143" width="14" height="3" fill="#3c5668"/><rect x="1817" y="136" width="35" height="2.2" fill="#4f7f3c"/><rect x="1817" y="138.5" width="7" height="2" fill="#4f7f3c"/><rect x="1817" y="143" width="8" height="1.8" fill="#4f7f3c"/><rect x="1817" y="146" width="8" height="1.8" fill="#4f7f3c"/><rect x="1785" y="149" width="7" height="3" fill="#3f6da8"/><rect x="1793" y="149.5" width="7" height="2.5" fill="#777"/><rect x="1786.5" y="152" width="4.5" height="15" fill="#77775a"/><rect x="1792" y="154" width="8" height="6" fill="#4d7496"/><rect x="1801" y="154" width="6.5" height="3" fill="#8a8a8a"/><rect x="1792" y="161" width="14" height="3" fill="#3c5668"/><rect x="1817" y="154" width="35" height="2.2" fill="#4f7f3c"/><rect x="1817" y="156.5" width="7" height="2" fill="#4f7f3c"/><rect x="1817" y="161" width="8" height="1.8" fill="#4f7f3c"/><rect x="1817" y="164" width="8" height="1.8" fill="#4f7f3c"/><rect x="1785" y="167" width="7" height="3" fill="#3f6da8"/><rect x="1793" y="167.5" width="7" height="2.5" fill="#777"/><rect x="1786.5" y="170" width="4.5" height="15" fill="#77775a"/><rect x="1792" y="172" width="8" height="6" fill="#4d7496"/><rect x="1801" y="172" width="6.5" height="3" fill="#8a8a8a"/><rect x="1792" y="179" width="14" height="3" fill="#3c5668"/><rect x="1817" y="172" width="35" height="2.2" fill="#4f7f3c"/><rect x="1817" y="174.5" width="7" height="2" fill="#4f7f3c"/><rect x="1817" y="179" width="8" height="1.8" fill="#4f7f3c"/><rect x="1817" y="182" width="8" height="1.8" fill="#4f7f3c"/><rect x="1785" y="185" width="7" height="3" fill="#3f6da8"/><rect x="1793" y="185.5" width="7" height="2.5" fill="#777"/><rect x="1786.5" y="188" width="4.5" height="15" fill="#77775a"/><rect x="1792" y="190" width="8" height="6" fill="#4d7496"/><rect x="1801" y="190" width="6.5" height="3" fill="#8a8a8a"/><rect x="1792" y="197" width="14" height="3" fill="#3c5668"/><rect x="1817" y="190" width="35" height="2.2" fill="#4f7f3c"/><rect x="1817" y="192.5" width="7" height="2" fill="#4f7f3c"/><rect x="1817" y="197" width="8" height="1.8" fill="#4f7f3c"/><rect x="1817" y="200" width="8" height="1.8" fill="#4f7f3c"/><rect x="1785" y="203" width="7" height="3" fill="#3f6da8"/><rect x="1793" y="203.5" width="7" height="2.5" fill="#777"/><rect x="1786.5" y="206" width="4.5" height="15" fill="#77775a"/><rect x="1792" y="208" width="8" height="6" fill="#4d7496"/><rect x="1801" y="208" width="6.5" height="3" fill="#8a8a8a"/><rect x="1792" y="215" width="14" height="3" fill="#3c5668"/><rect x="1817" y="208" width="35" height="2.2" fill="#4f7f3c"/><rect x="1817" y="210.5" width="7" height="2" fill="#4f7f3c"/><rect x="1817" y="215" width="8" height="1.8" fill="#4f7f3c"/><rect x="1817" y="218" width="8" height="1.8" fill="#4f7f3c"/><rect x="1785" y="221" width="7" height="3" fill="#3f6da8"/><rect x="1793" y="221.5" width="7" height="2.5" fill="#777"/><rect x="1786.5" y="224" width="4.5" height="15" fill="#77775a"/><rect x="1792" y="226" width="8" height="6" fill="#4d7496"/><rect x="1801" y="226" width="6.5" height="3" fill="#8a8a8a"/><rect x="1792" y="233" width="14" height="3" fill="#3c5668"/><rect x="1817" y="226" width="35" height="2.2" fill="#4f7f3c"/><rect x="1817" y="228.5" width="7" height="2" fill="#4f7f3c"/><rect x="1817" y="233" width="8" height="1.8" fill="#4f7f3c"/><rect x="1817" y="236" width="8" height="1.8" fill="#4f7f3c"/></g></svg>
<div class="a" style="left:1784px;top:216.2px;width:112px;height:1.2px;background:#2a5a8e;"></div>
<div class="a" style="left:1896px;top:130px;width:1px;height:574px;background:#2b2b2b;"></div>
<div class="a" style="left:1897px;top:425px;width:13px;height:7px;background:#6b6b1e;"></div>
<div class="a" style="left:1897px;top:424px;width:13px;height:1.5px;background:#9a9a80;"></div>
<div class="a" style="left:536px;top:704px;width:1374px;height:1px;background:#414141;"></div>
<div class="a nw " style="top:712.50px;font-size:11px;line-height:20px;color:#9d9d9d;left:555.00px;">问题</div>
<div class="a nw " style="top:712.50px;font-size:11px;line-height:20px;color:#9d9d9d;left:600.00px;">输出</div>
<div class="a nw " style="top:712.50px;font-size:11px;line-height:20px;color:#9d9d9d;left:647.00px;">调试控制台</div>
<div class="a nw " style="top:712.50px;font-size:11px;line-height:20px;color:#e7e7e7;left:723.00px;">终端</div>
<div class="a" style="left:722px;top:732.5px;width:26px;height:1.2px;background:#e7e7e7;"></div>
<svg class="a" style="left:1823px;top:715px" width="14" height="14" fill="none" stroke="#c5c5c5" stroke-width="1" shape-rendering="crispEdges"><path d="M7.5 1v13M1 7.5h13"/></svg>
<svg class="a" style="left:1842px;top:720px" width="8" height="5" fill="none" stroke="#c5c5c5" stroke-width="1"><path d="M0.5 0.5L4 4L7.5 0.5"/></svg>
<svg class="a" style="left:1864px;top:718px" width="11" height="7" fill="none" stroke="#c5c5c5" stroke-width="1.1"><path d="M0.5 6L5.5 1L10.5 6"/></svg>
<svg class="a" style="left:1886px;top:717px" width="10" height="10" fill="none" stroke="#c5c5c5" stroke-width="1.2"><path d="M0.5 0.5L9.5 9.5M9.5 0.5L0.5 9.5"/></svg>
<div class="a" style="left:1710px;top:740px;width:1px;height:246px;background:#3c3c3c;"></div>
<svg class="a" style="left:1722px;top:744px" width="13" height="13" fill="none" stroke="#c5c5c5" stroke-width="1"><rect x="0.5" y="0.5" width="12" height="12"/><path d="M4 3.5L7 6.5L4 9.5"/></svg>
<div class="a nw " style="top:740.50px;font-size:13px;line-height:20px;color:#cccccc;left:1740.00px;">bash</div>
<div class="a" style="left:1711px;top:761px;width:199px;height:22px;background:#37373d;"></div>
<svg class="a" style="left:1721px;top:765px" width="15" height="15" fill="none" stroke="#c5c5c5" stroke-width="1.5"><path d="M2 13L9.5 5.5M3 2.5l9.5 9.5M1.5 4L4 1.5M11 13.5l2.5-2.5"/><circle cx="10.5" cy="4.5" r="2.5"/></svg>
<div class="a nw " style="top:762.00px;font-size:13px;line-height:20px;color:#cccccc;transform:scaleX(0.92);transform-origin:0 0;left:1740.00px;">Run RISCV-QEMU</div>
<div class="a nw " style="top:762.50px;font-size:12px;line-height:20px;color:#9d9d9d;transform:scaleX(0.92);transform-origin:0 0;left:1849.00px;">Task</div>
<svg class="a" style="left:1885px;top:766px" width="14" height="12" fill="none" stroke="#9d9d9d" stroke-width="1.2"><path d="M1 7l4 4L13 1"/></svg>
<div class="a nw mono" style="top:748.60px;font-size:13.2px;line-height:15.8px;color:#cccccc;left:555.00px;transform:scaleY(1.1);transform-origin:0 50%;">CC -[M] <span style="display:inline-block;width:15.840px">正</span><span style="display:inline-block;width:15.840px">在</span><span style="display:inline-block;width:15.840px">构</span><span style="display:inline-block;width:15.840px">建</span>... beq.S</div>
<div class="a nw mono" style="top:764.60px;font-size:13.2px;line-height:15.8px;color:#cccccc;left:555.00px;transform:scaleY(1.1);transform-origin:0 50%;">CC -[M] <span style="display:inline-block;width:15.840px">正</span><span style="display:inline-block;width:15.840px">在</span><span style="display:inline-block;width:15.840px">构</span><span style="display:inline-block;width:15.840px">建</span>... jal.S</div>
<div class="a nw mono" style="top:780.60px;font-size:13.2px;line-height:15.8px;color:#cccccc;left:555.00px;transform:scaleY(1.1);transform-origin:0 50%;">CC -[M] <span style="display:inline-block;width:15.840px">正</span><span style="display:inline-block;width:15.840px">在</span><span style="display:inline-block;width:15.840px">构</span><span style="display:inline-block;width:15.840px">建</span>... main.c</div>
<div class="a nw mono" style="top:796.10px;font-size:13.2px;line-height:15.8px;color:#cccccc;left:555.00px;transform:scaleY(1.1);transform-origin:0 50%;">CC -[M] <span style="display:inline-block;width:15.840px">正</span><span style="display:inline-block;width:15.840px">在</span><span style="display:inline-block;width:15.840px">构</span><span style="display:inline-block;width:15.840px">建</span>... main.elf</div>
<div class="a nw mono" style="top:812.10px;font-size:13.2px;line-height:15.8px;color:#cccccc;left:555.00px;transform:scaleY(1.1);transform-origin:0 50%;">CC -[M] <span style="display:inline-block;width:15.840px">正</span><span style="display:inline-block;width:15.840px">在</span><span style="display:inline-block;width:15.840px">构</span><span style="display:inline-block;width:15.840px">建</span>... beq.o</div>
<div class="a nw mono" style="top:827.60px;font-size:13.2px;line-height:15.8px;color:#cccccc;left:555.00px;transform:scaleY(1.1);transform-origin:0 50%;">CC -[M] <span style="display:inline-block;width:15.840px">正</span><span style="display:inline-block;width:15.840px">在</span><span style="display:inline-block;width:15.840px">构</span><span style="display:inline-block;width:15.840px">建</span>... jal.o</div>
<div class="a nw mono" style="top:843.60px;font-size:13.2px;line-height:15.8px;color:#cccccc;left:555.00px;transform:scaleY(1.1);transform-origin:0 50%;">CC -[M] <span style="display:inline-block;width:15.840px">正</span><span style="display:inline-block;width:15.840px">在</span><span style="display:inline-block;width:15.840px">构</span><span style="display:inline-block;width:15.840px">建</span>... main.o</div>
<div class="a nw mono" style="top:875.10px;font-size:13.2px;line-height:15.8px;color:#e5e5e5;font-weight:bold;left:555.00px;transform:scaleY(1.1);transform-origin:0 50%;"><span style="display:inline-block;width:15.840px">终</span><span style="display:inline-block;width:15.840px">端</span><span style="display:inline-block;width:15.840px">将</span><span style="display:inline-block;width:15.840px">被</span><span style="display:inline-block;width:15.840px">任</span><span style="display:inline-block;width:15.840px">务</span><span style="display:inline-block;width:15.840px">重</span><span style="display:inline-block;width:15.840px">用</span><span style="display:inline-block;width:15.840px">，</span><span style="display:inline-block;width:15.840px">按</span><span style="display:inline-block;width:15.840px">任</span><span style="display:inline-block;width:15.840px">意</span><span style="display:inline-block;width:15.840px">键</span><span style="display:inline-block;width:15.840px">关</span><span style="display:inline-block;width:15.840px">闭</span><span style="display:inline-block;width:15.840px">。</span></div>
<div class="a nw mono" style="top:906.60px;font-size:13.2px;line-height:15.8px;color:#e5e5e5;font-weight:bold;left:555.00px;transform:scaleY(1.1);transform-origin:0 50%;">&gt; Executing task: echo Starting RISCV-QEMU&amp;qemu-riscv32 -g 1234 ./*.elf &lt;</div>
<div class="a nw mono" style="top:938.60px;font-size:13.2px;line-height:15.8px;color:#cccccc;left:555.00px;transform:scaleY(1.1);transform-origin:0 50%;">Starting RISCV-QEMU</div>
<div class="a nw mono" style="top:954.60px;font-size:13.2px;line-height:15.8px;color:#cccccc;left:555.00px;transform:scaleY(1.1);transform-origin:0 50%;">This a &gt;= b:1</div>
<div class="a" style="left:555px;top:968px;width:8px;height:16px;border:1px solid #cccccc"></div>
<div class="a" style="left:10px;top:986px;width:1900px;height:22px;background:#cc6633;"></div>
<div class="a" style="left:10px;top:986px;width:33px;height:22px;background:#16825d;"></div>
<svg class="a" style="left:0;top:980px" width="50" height="30" fill="none" stroke="#e8f5ee" stroke-width="1.3"><path d="M22.2 14.9L26.7 19L22.8 22.7M31.4 11.2L27.2 15.1L31.4 19"/></svg>
<svg class="a" style="left:52px;top:991px" width="12" height="12" fill="none" stroke="#fff" stroke-width="1"><circle cx="6" cy="6" r="5.3"/><path d="M4 4l4 4M8 4l-4 4"/></svg>
<div class="a nw " style="top:987.00px;font-size:12px;line-height:20px;color:#ffffff;left:66.00px;">0</div>
<svg class="a" style="left:77px;top:990px" width="13" height="12" fill="none" stroke="#fff" stroke-width="1"><path d="M6.5 1L12.3 11.3H0.7z"/><path d="M6.5 4.5v3.5M6.5 9v1"/></svg>
<div class="a nw " style="top:987.00px;font-size:12px;line-height:20px;color:#ffffff;left:93.00px;">0</div>
<svg class="a" style="left:116px;top:990px" width="14" height="14" fill="none" stroke="#fff" stroke-width="1.3"><path d="M2 12L9 5M3 2l9 9M1.5 3.5L3.5 1.5M10.5 12.5l2-2"/><circle cx="10" cy="4" r="2.2"/></svg>
<div class="a nw " style="top:987.00px;font-size:12px;line-height:20px;color:#ffffff;left:132.00px;">1</div>
<svg class="a" style="left:155px;top:990px" width="14" height="14" fill="none" stroke="#fff" stroke-width="1.1"><path d="M5 2.5L12.5 7L5 11.5"/><rect x="1.5" y="8" width="5" height="5"/></svg>
<div class="a nw " style="top:987.60px;font-size:12.5px;line-height:20px;color:#ffffff;transform:scaleX(0.96);transform-origin:0 0;left:172.00px;">(gdb) 启动 (17)</div>
<div class="a nw " style="top:987.60px;font-size:12.5px;line-height:20px;color:#ffffff;transform:scaleX(0.96);transform-origin:0 0;left:1538.00px;">行 44，列 1</div>
<div class="a nw " style="top:987.60px;font-size:12.5px;line-height:20px;color:#ffffff;transform:scaleX(0.96);transform-origin:0 0;left:1614.00px;">空格: 4</div>
<div class="a nw " style="top:987.60px;font-size:12.5px;line-height:20px;color:#ffffff;transform:scaleX(0.96);transform-origin:0 0;left:1666.00px;">UTF-8</div>
<div class="a nw " style="top:987.60px;font-size:12.5px;line-height:20px;color:#ffffff;transform:scaleX(0.96);transform-origin:0 0;left:1715.00px;">LF</div>
<div class="a nw " style="top:987.60px;font-size:12.5px;line-height:20px;color:#ffffff;transform:scaleX(0.93);transform-origin:0 0;left:1744.00px;">RISC-V Assembly</div>
<svg class="a" style="left:1851px;top:990px" width="16" height="14" fill="none" stroke="#fff" stroke-width="1.1"><circle cx="7" cy="6" r="2.6"/><path d="M2.5 13c.8-2.5 2.5-4 4.5-4s3.7 1.5 4.5 4M7.5 1.5h7v5h-2"/></svg>
<svg class="a" style="left:1881px;top:990px" width="14" height="14" fill="none" stroke="#fff" stroke-width="1.1"><path d="M3 11V6.5a4 4 0 0 1 8 0V11zM2 11h10M6 13h2"/><circle cx="11" cy="3" r="2" fill="#fff"/></svg>
</body></html>
